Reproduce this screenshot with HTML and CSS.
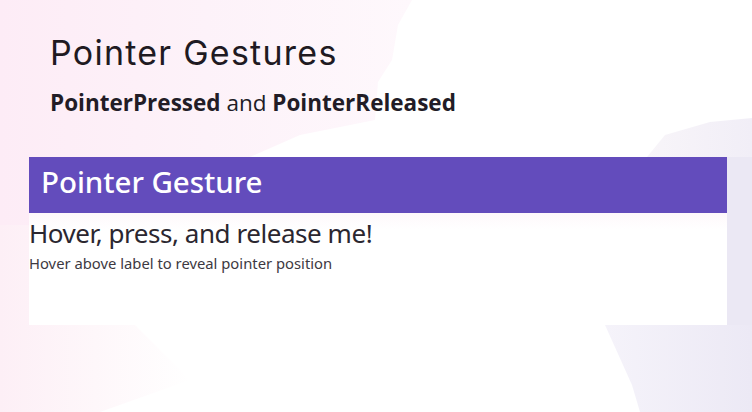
FILE: index.html
```html
<!DOCTYPE html>
<html lang="en">
<head>
<meta charset="utf-8">
<title>Pointer Gestures</title>
<link rel="stylesheet" href="styles.css">
</head>
<body>
<main class="slide">
  <svg class="backdrop" viewBox="0 0 752 412" preserveAspectRatio="none" aria-hidden="true">
    <defs>
      <linearGradient id="pink" x1="0" y1="0" x2="1" y2="0">
        <stop offset="0" stop-color="#fdecf6"/>
        <stop offset="0.5" stop-color="#fdf2f9"/>
        <stop offset="1" stop-color="#fef8fc"/>
      </linearGradient>
      <linearGradient id="lowpink" x1="0" y1="0" x2="1" y2="0">
        <stop offset="0" stop-color="#fdeff6"/>
        <stop offset="0.5" stop-color="#fef7fa"/>
        <stop offset="1" stop-color="#ffffff"/>
      </linearGradient>
      <linearGradient id="lav" x1="0" y1="0" x2="1" y2="0">
        <stop offset="0" stop-color="#f8f5f9"/>
        <stop offset="1" stop-color="#f1eef7"/>
      </linearGradient>
      <linearGradient id="lavlow" x1="0" y1="0" x2="1" y2="0">
        <stop offset="0" stop-color="#f5f3fa"/>
        <stop offset="1" stop-color="#ece9f5"/>
      </linearGradient>
    </defs>
    <path d="M0 0H412L398 25L392 60L378 82L375 120L300 135L250 157H29V412H0Z" fill="url(#pink)"/>
    <path d="M0 225H29V320H130L190 380L100 412H0Z" fill="url(#lowpink)"/>
    <path d="M647 157L665 135L710 122L752 118V157Z" fill="url(#lav)"/>
    <path d="M605 325H727V157H752V412H640L632 385Z" fill="url(#lavlow)"/>
    <path d="M727 157H752V325H727Z" fill="#ebe8f4"/>
  </svg>
  <header class="intro">
    <h1 class="title">Pointer Gestures</h1>
    <p class="subtitle"><strong>PointerPressed</strong> and <strong>PointerReleased</strong></p>
  </header>
  <section class="panel">
    <h2 class="panel-head">Pointer Gesture</h2>
    <p class="panel-main">Hover, press, and release me!</p>
    <p class="panel-note">Hover above label to reveal pointer position</p>
  </section>
</main>
</body>
</html>
```
FILE: styles.css
```css
* { box-sizing: border-box; }
html, body { margin: 0; padding: 0; }
body { width: 752px; height: 412px; overflow: hidden; background: #fff; }
.slide {
  position: relative;
  width: 752px;
  height: 412px;
  padding: 34px 25px 0 29px;
  display: flex;
  flex-direction: column;
  color: #201a24;
}
.backdrop { position: absolute; inset: 0; width: 752px; height: 412px; }
.intro, .panel { position: relative; }
.intro { padding-left: 21px; height: 123px; }
.title {
  margin: 0;
  font: 400 34px/38px Inter, sans-serif;
  letter-spacing: 1.25px;
  color: #1f1a22;
}
.subtitle {
  margin: 16px 0 0;
  font: 400 22.5px/30px "Open Sans", sans-serif;
  color: #221c26;
}
.subtitle strong { font-weight: 700; }
.panel {
  height: 168px;
  background:
    linear-gradient(to bottom, transparent 56px, #fef8fb 56px, #fff 72px),
    linear-gradient(to right, #fef6fa, #fff 60px);
}
.panel-head {
  margin: 0;
  height: 56px;
  padding: 5px 0 0 12px;
  background: #634cbc;
  color: #fff;
  font: 500 29.5px/40px "Noto Sans", sans-serif;
  letter-spacing: -0.05px;
}
.panel-main {
  margin: 2px 0 0;
  font: 400 26px/36px "Noto Sans", sans-serif;
  letter-spacing: -0.45px;
  color: #2b2730;
}
.panel-note {
  margin: 3px 0 0;
  font: 400 14.8px/18px "Noto Sans", sans-serif;
  color: #3d3942;
}
```
